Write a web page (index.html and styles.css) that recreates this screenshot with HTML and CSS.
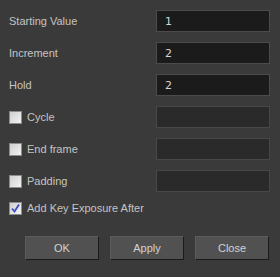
FILE: index.html
```html
<!DOCTYPE html>
<html lang="en">
<head>
    <meta charset="UTF-8">
    <title>Sequence Fill</title>
    <link rel="stylesheet" href="styles.css">
</head>
<body>
    <div class="dialog">
        <div class="fields">
            <div class="row">
                <label class="label">Starting Value</label>
                <input class="field" type="text" value="1">
            </div>
            <div class="row">
                <label class="label">Increment</label>
                <input class="field" type="text" value="2">
            </div>
            <div class="row">
                <label class="label">Hold</label>
                <input class="field" type="text" value="2">
            </div>
            <div class="row">
                <label class="label check"><span class="box"></span>Cycle</label>
                <input class="field" type="text" disabled>
            </div>
            <div class="row">
                <label class="label check"><span class="box"></span>End frame</label>
                <input class="field" type="text" disabled>
            </div>
            <div class="row">
                <label class="label check"><span class="box"></span>Padding</label>
                <input class="field" type="text" disabled>
            </div>
            <div class="row short">
                <label class="label check"><span class="box checked"><svg width="11" height="11" viewBox="0 0 11 11"><path d="M2 5.5 L4.5 8.5 L9 1.5" fill="none" stroke="#3a4fc0" stroke-width="1.8"/></svg></span>Add Key Exposure After</label>
            </div>
        </div>
        <div class="buttons">
            <button>OK</button>
            <button>Apply</button>
            <button>Close</button>
        </div>
    </div>
</body>
</html>
```

FILE: styles.css
```css
body {
    margin: 0;
    background-color: #3a3a3a;
    font-family: "Liberation Sans", Arial, sans-serif;
    font-size: 11px;
    color: #c4c4c4;
}

.dialog {
    width: 280px;
    height: 277px;
    box-sizing: border-box;
    padding: 10px 10px 0 9px;
}

.fields {
    display: flex;
    flex-direction: column;
    gap: 10px;
}

.row {
    display: flex;
    align-items: center;
    height: 22px;
}

.row.short {
    height: 16px;
    margin-top: -2px;
}

.label {
    width: 148px;
    display: flex;
    align-items: center;
}

.check .box {
    width: 11px;
    height: 11px;
    border: 1px solid #8c8c8c;
    background: linear-gradient(135deg, #cfcfcf, #f4f4f4);
    margin-right: 5px;
    display: flex;
    align-items: center;
    justify-content: center;
}

.field {
    width: 114px;
    height: 22px;
    box-sizing: border-box;
    border: 1px solid #4b4b4b;
    background-color: #1b1b1b;
    color: #d4d4d4;
    font-family: "DejaVu Sans", sans-serif;
    font-size: 11px;
    padding: 0 0 0 8px;
    outline: none;
}

.field:disabled {
    background-color: #2a2a2a;
    border-color: #474747;
}

.buttons {
    display: flex;
    gap: 11px;
    margin-top: 20px;
    padding-left: 16px;
}

button {
    width: 74px;
    height: 24px;
    box-sizing: border-box;
    background-color: #515151;
    border: 1px solid #5c5c5c;
    border-right-color: #1a1a1a;
    border-bottom-color: #1a1a1a;
    color: #d2d2d2;
    font-family: "Liberation Sans", Arial, sans-serif;
    font-size: 11px;
    padding: 0;
}
```
